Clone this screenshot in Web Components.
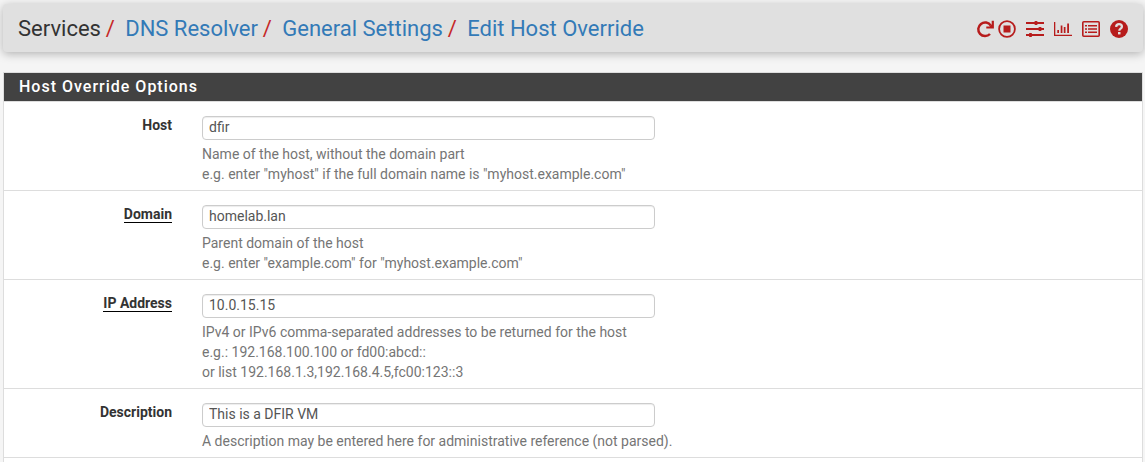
<!DOCTYPE html>
<html lang="en">
<head>
<meta charset="utf-8">
<title>Edit Host Override</title>
<style>
html,body{margin:0;height:462px;overflow:hidden;background:#f5f5f5}
body{font:14px/20px Roboto,sans-serif;color:#333}
</style>
</head>
<body>
<settings-page></settings-page>
<script>
class Base extends HTMLElement{
  constructor(){super();this.attachShadow({mode:'open'});}
  connectedCallback(){this.shadowRoot.innerHTML=this.view();}
}
const ICONS={
  redo:'<path d="M14.8 5.6A6.8 6.8 0 1 0 14 14" fill="none" stroke="currentColor" stroke-width="2.5"/><path d="M15.7.8h2.2v7.8h-7.6V6.4h3.2l2.2-2z"/>',
  stop:'<circle cx="9" cy="9" r="7.9" fill="none" stroke="currentColor" stroke-width="1.8"/><path d="M5.5 5.5h7v7h-7z"/>',
  sliders:'<path d="M0 2h18v2H0zM0 8h18v2H0zM0 14h18v2H0z"/><rect x="8.5" y="1" width="3" height="4" rx=".8"/><rect x="12.5" y="7" width="3" height="4" rx=".8"/><rect x="3" y="13" width="3" height="4" rx=".8"/>',
  chart:'<path d="M0 2h1.3v12.7H18V16H0zM3.3 10h1.7v3H3.3zM6.7 5.5h1.7V13H6.7zM9.8 7h1.7v6H9.8zM13.2 3.5h1.8V13h-1.8z"/>',
  list:'<rect x=".8" y="1.8" width="16.4" height="14.4" rx="1" fill="none" stroke="currentColor" stroke-width="1.6"/><path d="M3 5h2v1.6H3zM3 8.2h2v1.6H3zM3 11.4h2V13H3zM6 5h9v1.6H6zM6 8.2h9v1.6H6zM6 11.4h9V13H6z"/>',
  help:'<circle cx="9" cy="9" r="9"/><path d="M6.1 6.9C6.3 4.9 7.5 4.2 9 4.2c1.7 0 2.9 1 2.9 2.5 0 2-2.6 2-2.6 4" fill="none" stroke="#e0e0e0" stroke-width="2.3"/><path d="M8 12h2.5v2.4H8z" fill="#e0e0e0"/>'
};
customElements.define('tool-icon',class extends Base{
  view(){return `<style>:host{display:block;width:18px;height:18px;color:#b71c1c}svg{display:block;fill:currentColor}</style><svg width="18" height="18" viewBox="0 0 18 18">${ICONS[this.getAttribute('name')]}</svg>`;}
});
customElements.define('crumb-item',class extends Base{
  view(){return `<style>:host{display:block;color:#337ab7;white-space:nowrap}:host([plain]){color:#333}
  :host(:not([plain]))::before{content:"/";color:#c62828;display:inline-block;width:19.5px}</style><slot></slot>`;}
});
customElements.define('page-header',class extends Base{
  view(){return `<style>:host{display:flex;box-sizing:border-box;height:48px;margin:0 2px 20px 3px;padding:0 15px;align-items:center;justify-content:space-between;background:#e0e0e0;border-radius:4px;box-shadow:0 2px 10px rgba(0,0,0,.28)}
  nav{display:flex;gap:4.8px;font-size:22px;line-height:30px;padding-top:2px}
  .tools{display:flex;gap:10px;padding-top:2px}.tools :first-child{margin-right:-6px}</style>
  <nav><slot></slot></nav><div class="tools">${Object.keys(ICONS).map(n=>`<tool-icon name="${n}"></tool-icon>`).join('')}</div>`;}
});
customElements.define('form-panel',class extends Base{
  view(){return `<style>:host{display:block;margin:0 2px 0 3px;padding-bottom:20px;border:1px solid #ddd;background:#fff}
  h2{margin:0;height:28px;padding-left:15px;background:#424242;border-bottom:1px solid #ddd;color:#fff;font-size:16px;line-height:27px;font-weight:500;letter-spacing:1px}</style>
  <h2>${this.getAttribute('heading')}</h2><slot></slot>`;}
});
customElements.define('form-row',class extends Base{
  view(){return `<style>:host{display:grid;grid-template-columns:168px 453px;column-gap:30px;padding:14px 0 6px;border-bottom:1px solid #ddd}
  .label{text-align:right;font-weight:700;line-height:18px}.label span{display:inline-block}
  :host([required]) .label span{border-bottom:1px solid #000;line-height:16px}
  input{display:block;box-sizing:border-box;width:453px;height:24px;margin:0 0 4px;padding:0 6px 2px;border:1px solid #ccc;border-radius:4px;background:#fff;box-shadow:inset 0 1px 1px rgba(0,0,0,.075);font:14px Roboto,sans-serif;color:#555}
  .help{color:#757575;white-space:nowrap}</style>
  <div class="label"><span>${this.getAttribute('label')}</span></div><div><input value="${this.getAttribute('value')}"><div class="help"><slot></slot></div></div>`;}
});
customElements.define('settings-page',class extends Base{
  view(){return `<style>:host{display:block;padding-top:4px}</style>
  <page-header><crumb-item plain>Services</crumb-item><crumb-item>DNS Resolver</crumb-item><crumb-item>General Settings</crumb-item><crumb-item>Edit Host Override</crumb-item></page-header>
  <form-panel heading="Host Override Options">
  <form-row label="Host" value="dfir">Name of the host, without the domain part<br>e.g. enter "myhost" if the full domain name is "myhost.example.com"</form-row>
  <form-row required label="Domain" value="homelab.lan">Parent domain of the host<br>e.g. enter "example.com" for "myhost.example.com"</form-row>
  <form-row required label="IP Address" value="10.0.15.15">IPv4 or IPv6 comma-separated addresses to be returned for the host<br>e.g.: 192.168.100.100 or fd00:abcd::<br>or list 192.168.1.3,192.168.4.5,fc00:123::3</form-row>
  <form-row label="Description" value="This is a DFIR VM">A description may be entered here for administrative reference (not parsed).</form-row>
  </form-panel>`;}
});
</script>
</body>
</html>
